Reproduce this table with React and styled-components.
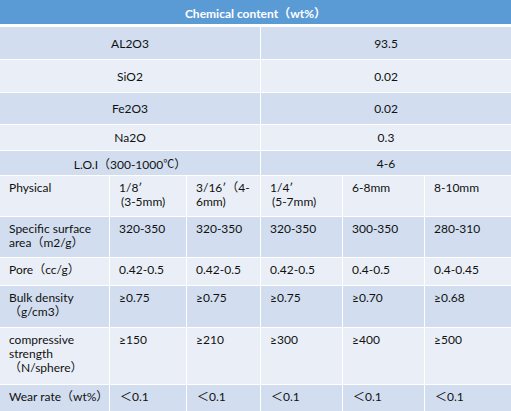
import styled, { createGlobalStyle } from "styled-components"

const GlobalStyle = createGlobalStyle`
  body {
    margin: 0;
    background: #ffffff;
  }
`

const Sheet = styled.div`
  width: 511px;
  height: 411px;
  overflow: hidden;
  background: #ffffff;
  font-family: Lato, "Noto Sans CJK SC", sans-serif;
  font-size: 12px;
  color: #111111;
`

const Title = styled.div`
  height: 24px;
  margin-bottom: 3px;
  background: #5b9bd5;
  color: #ffffff;
  font-weight: bold;
  display: flex;
  align-items: center;
  justify-content: center;
`

const ChemGrid = styled.div`
  display: grid;
  grid-template-columns: 260px 250px;
  grid-template-rows: 32px 32px 31px 25px 24px;
  gap: 1px;
  margin-bottom: 1px;
`

const ChemCell = styled.div`
  background: ${p => (p.dark ? "#d2deef" : "#eaeff7")};
  display: flex;
  align-items: center;
  justify-content: center;
`

const Cjk = styled.span`
  font-family: "Noto Sans CJK SC", sans-serif;
  font-size: 11px;
`

const PhysGrid = styled.div`
  display: grid;
  grid-template-columns: 109px 76px 73px 81px 81px 86px;
  grid-template-rows: 40px 40px 27px 41px 56px 26px;
  gap: 1px;
`

const PhysCell = styled.div`
  background: ${p => (p.dark ? "#d2deef" : "#eaeff7")};
  padding: 5px 4px 0 9px;
  line-height: 14px;
`

const Line = styled.div`
  white-space: nowrap;
  height: 14px;
  padding-left: ${p => p.indent || 0}px;
`

const chemical = [
  ["AL2O3", "93.5"],
  ["SiO2", "0.02"],
  ["Fe2O3", "0.02"],
  ["Na2O", "0.3"],
  [<>L.O.I（300-1000<Cjk>℃</Cjk>）</>, "4-6"],
]

const physical = [
  [
    ["Physical"],
    ["1/8′", [" (3-5mm)", 2]],
    ["3/16′（4-", "6mm)"],
    ["1/4′", [" (5-7mm)", 2]],
    ["6-8mm"],
    ["8-10mm"],
  ],
  [["Specific surface", "area（m2/g）"], ["320-350"], ["320-350"], ["320-350"], ["300-350"], ["280-310"]],
  [["Pore（cc/g）"], ["0.42-0.5"], ["0.42-0.5"], ["0.42-0.5"], ["0.4-0.5"], ["0.4-0.45"]],
  [["Bulk density", "（g/cm3）"], ["≥0.75"], ["≥0.75"], ["≥0.75"], ["≥0.70"], ["≥0.68"]],
  [["compressive", "strength", "（N/sphere）"], ["≥150"], ["≥210"], ["≥300"], ["≥400"], ["≥500"]],
  [["Wear rate（wt%）"], [["＜0.1", 1]], [["＜0.1", 1]], [["＜0.1", 1]], [["＜0.1", 1]], [["＜0.1", 1]]],
]

const App = () => {
  return (
    <Sheet>
      <GlobalStyle />
      <Title>Chemical content（wt%）</Title>
      <ChemGrid>
        {chemical.map((row, i) =>
          row.map((text, j) => (
            <ChemCell key={i + "-" + j} dark={i % 2 === 0}>{text}</ChemCell>
          ))
        )}
      </ChemGrid>
      <PhysGrid>
        {physical.map((row, i) =>
          row.map((lines, j) => (
            <PhysCell key={i + "-" + j} dark={i % 2 === 1}>
              {lines.map((l, k) =>
                Array.isArray(l)
                  ? <Line key={k} indent={l[1]}>{l[0].trim()}</Line>
                  : <Line key={k}>{l}</Line>
              )}
            </PhysCell>
          ))
        )}
      </PhysGrid>
    </Sheet>
  )
}

export default App
